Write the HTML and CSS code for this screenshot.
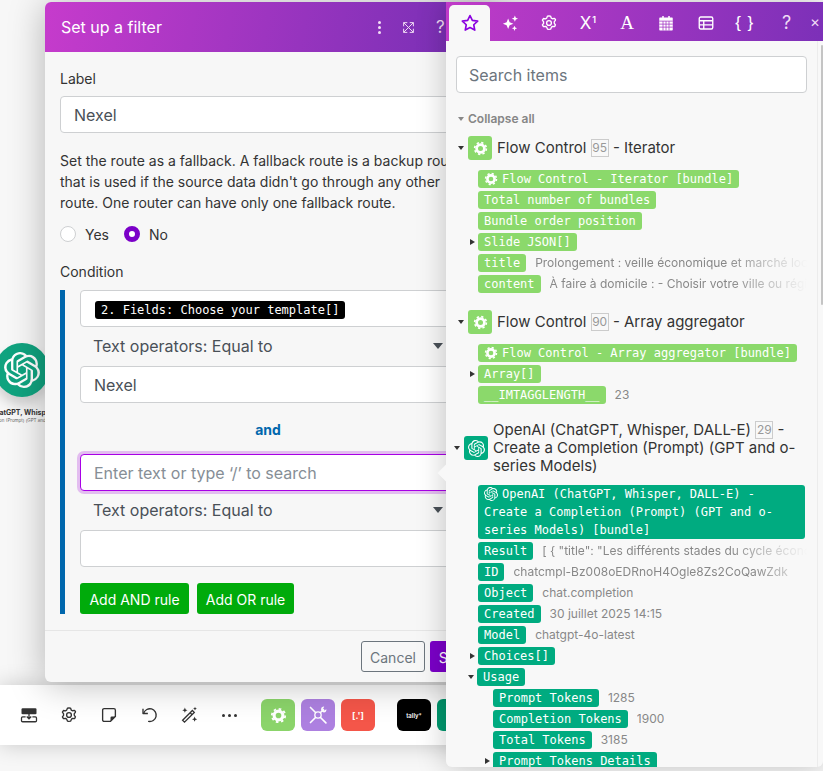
FILE: index.html
```html
<!DOCTYPE html>
<html lang="en">
<head>
<meta charset="utf-8">
<title>Set up a filter</title>
<link rel="stylesheet" href="styles.css">
</head>
<body>
<svg class="defs" width="0" height="0" aria-hidden="true">
  <symbol id="openai" viewBox="0 0 24 24"><path fill="currentColor" d="M22.2819 9.8211a5.9847 5.9847 0 0 0-.5157-4.9108 6.0462 6.0462 0 0 0-6.5098-2.9A6.0651 6.0651 0 0 0 4.9807 4.1818a5.9847 5.9847 0 0 0-3.9977 2.9 6.0462 6.0462 0 0 0 .7427 7.0966 5.98 5.98 0 0 0 .511 4.9107 6.051 6.051 0 0 0 6.5146 2.9001A5.9847 5.9847 0 0 0 13.2599 24a6.0557 6.0557 0 0 0 5.7718-4.2058 5.9894 5.9894 0 0 0 3.9977-2.9001 6.0557 6.0557 0 0 0-.7475-7.0729zm-9.022 12.6081a4.4755 4.4755 0 0 1-2.8764-1.0408l.1419-.0804 4.7783-2.7582a.7948.7948 0 0 0 .3927-.6813v-6.7369l2.02 1.1686a.071.071 0 0 1 .038.052v5.5826a4.504 4.504 0 0 1-4.4945 4.4944zm-9.6607-4.1254a4.4708 4.4708 0 0 1-.5346-3.0137l.142.0852 4.783 2.7582a.7712.7712 0 0 0 .7806 0l5.8428-3.3685v2.3324a.0804.0804 0 0 1-.0332.0615L9.74 19.9502a4.4992 4.4992 0 0 1-6.1408-1.6464zM2.3408 7.8956a4.485 4.485 0 0 1 2.3655-1.9728V11.6a.7664.7664 0 0 0 .3879.6765l5.8144 3.3543-2.0201 1.1685a.0757.0757 0 0 1-.071 0l-4.8303-2.7865A4.504 4.504 0 0 1 2.3408 7.872zm16.5963 3.8558L13.1038 8.364 15.1192 7.2a.0757.0757 0 0 1 .071 0l4.8303 2.7913a4.4944 4.4944 0 0 1-.6765 8.1042v-5.6772a.79.79 0 0 0-.407-.667zm2.0107-3.0231l-.142-.0852-4.7735-2.7818a.7759.7759 0 0 0-.7854 0L9.409 9.2297V6.8974a.0662.0662 0 0 1 .0284-.0615l4.8303-2.7866a4.4992 4.4992 0 0 1 6.6802 4.66zM8.3065 12.863l-2.02-1.1638a.0804.0804 0 0 1-.038-.0567V6.0742a4.4992 4.4992 0 0 1 7.3757-3.4537l-.142.0805L8.704 5.459a.7948.7948 0 0 0-.3927.6813zm1.0976-2.3654l2.602-1.4998 2.6069 1.4998v2.9994l-2.5974 1.4997-2.6067-1.4997Z"/></symbol>
  <symbol id="cog" viewBox="0 0 24 24"><circle cx="12" cy="12" r="6.2" fill="none" stroke="currentColor" stroke-width="4.4"/><circle cx="12" cy="12" r="9.4" fill="none" stroke="currentColor" stroke-width="2.6" stroke-dasharray="3.7 3.68"/></symbol>
  <symbol id="gear-line" viewBox="0 0 24 24"><g fill="none" stroke="currentColor" stroke-width="1.8" stroke-linejoin="round"><path d="M12 2.5l2 .3 1 2.6 1.6.9 2.7-.5 1.3 1.6-.2 1 -1.5 2 .1 1.1 .1.9 1.5 2-1 2.4-2.7-.3-1.6 1-1 2.6-2.8.3-1.6-.3-1-2.6-1.6-1-2.7.4-1.4-2.4 1.6-2-.1-1 .1-1-1.6-2.2 1.4-2.3 2.7.4 1.6-.9 1-2.6z"/><circle cx="12" cy="12" r="3.2"/></g></symbol>
</svg>

<div class="node">
  <div class="node-circle"><svg class="node-logo"><use href="#openai"/></svg></div>
  <div class="node-title">OpenAI (ChatGPT, Whisper, DALL-E)</div>
  <div class="node-sub">Create a Completion (Prompt) (GPT and o-series Models)</div>
</div>

<div class="toolbar">
  <span class="tool"><svg viewBox="0 0 24 24" class="tool-svg"><rect x="2" y="3" width="20" height="8" rx="1.500" fill="#333"/><path d="M2 16v3.500A1.500 1.500 0 0 0 3.500 21h17a1.500 1.500 0 0 0 1.500-1.500V16a1.500 1.500 0 0 0-1.500-1.500h-4M2 16a1.500 1.500 0 0 1 1.500-1.500h4M12 10v7m-3-3l3 3 3-3" fill="none" stroke="#333" stroke-width="1.700"/></svg></span>
  <span class="tool"><svg class="tool-svg"><use href="#gear-line"/></svg></span>
  <span class="tool"><svg viewBox="0 0 24 24" class="tool-svg"><path d="M5.500 3.500h13a2 2 0 0 1 2 2V14l-6.500 6.500H5.500a2 2 0 0 1-2-2v-13a2 2 0 0 1 2-2z" fill="none" stroke="#333" stroke-width="1.800"/><path d="M20.500 14h-5a1.500 1.500 0 0 0-1.500 1.500v5z" fill="#333"/></svg></span>
  <span class="tool"><svg viewBox="0 0 24 24" class="tool-svg"><path d="M5 9.500A8.500 8.500 0 1 1 11.500 20.500" fill="none" stroke="#333" stroke-width="1.800" stroke-linecap="round"/><path d="M4 3.500V10h6.500" fill="none" stroke="#333" stroke-width="1.800" stroke-linejoin="round"/></svg></span>
  <span class="tool"><svg viewBox="0 0 24 24" class="tool-svg"><path d="M3.500 19l13-13 2.500 2.500-13 13zM13.500 9l2.500 2.500" fill="none" stroke="#333" stroke-width="1.800"/><path d="M6.500 2l1 2.500L10 5.500l-2.500 1-1 2.500-1-2.500L3 5.500l2.500-1zM20 1l.7 1.800 1.800.7-1.800.7L20 6l-.7-1.800-1.800-.7 1.800-.7zM19.500 14l1 2.500 2.500 1-2.500 1-1 2.500-1-2.500-2.500-1 2.500-1z" fill="#333"/></svg></span>
  <span class="tool tool-dots"><i></i><i></i><i></i></span>
  <span class="app app-green"><svg class="app-svg"><use href="#cog"/></svg></span>
  <span class="app app-purple"><svg viewBox="0 0 24 24" class="app-svg-lg"><g fill="none" stroke="#fff" stroke-width="2" stroke-linecap="round"><path d="M3 3l6 6M15 15l6.500 6.500M9 15l-6 6M15 9l3.500-3.500"/><circle cx="12" cy="12" r="3.800" stroke-width="1.600"/><path d="M17 8l2 1a3.500 3.500 0 0 0 3-4l-2.500 1.500L18 4.500 19.500 2a3.500 3.500 0 0 0-4 3z" fill="#fff" stroke="none"/></g></svg></span>
  <span class="app app-red">[.']</span>
  <span class="app app-black">tally*</span>
  <span class="app app-teal"></span>
</div>

<section class="modal">
  <header class="modal-head">
    <h1 class="modal-title">Set up a filter</h1>
    <span class="head-dots"><i></i><i></i><i></i></span>
    <svg viewBox="0 0 16 16" class="head-expand"><path d="M2 2l12 12M14 2L2 14M2 6.500V2h4.500M9.500 2H14v4.500M14 9.500V14H9.500M6.500 14H2V9.500" fill="none" stroke="#f3dff5" stroke-width="1.200"/></svg>
    <span class="head-help">?</span>
  </header>
  <div class="modal-body">
    <label class="field-label">Label</label>
    <div class="input input-label">Nexel</div>
    <p class="help">Set the route as a fallback. A fallback route is a backup route that is used if the source data didn't go through any other route. One router can have only one fallback route.</p>
    <div class="radios">
      <span class="radio"></span><span class="radio-text">Yes</span>
      <span class="radio radio-on"></span><span class="radio-text">No</span>
    </div>
    <label class="field-label cond-label">Condition</label>
    <div class="cond">
      <div class="input"><span class="token">2. Fields: Choose your template[]</span></div>
      <div class="operator"><span>Text operators: Equal to</span><span class="op-caret"></span></div>
      <div class="input">Nexel</div>
      <div class="and">and</div>
      <div class="input input-focus">Enter text or type ‘/’ to search</div>
      <div class="operator"><span>Text operators: Equal to</span><span class="op-caret"></span></div>
      <div class="input"></div>
      <div class="cond-actions">
        <button class="btn btn-green btn-and">Add AND rule</button>
        <button class="btn btn-green btn-or">Add OR rule</button>
      </div>
    </div>
  </div>
  <footer class="modal-foot">
    <button class="btn btn-cancel">Cancel</button>
    <button class="btn btn-save">Save</button>
  </footer>
</section>

<aside class="panel">
  <span class="pointer"></span>
  <nav class="tabs">
    <span class="tab tab-active"><svg viewBox="0 0 24 24" class="tab-icon star"><path d="M12 3l2.800 5.900 6.400.8-4.700 4.400 1.200 6.400L12 17.400l-5.700 3.100 1.200-6.400-4.700-4.400 6.400-.8z" fill="none" stroke="#8a00e0" stroke-width="2" stroke-linejoin="round"/></svg></span>
    <span class="tab"><svg viewBox="0 0 24 24" class="tab-icon"><path d="M9.500 6l2 5 5 2-5 2-2 5-2-5-5-2 5-2zM18.500 2l1.200 3 3 1.200-3 1.200-1.200 3-1.200-3-3-1.200 3-1.200zM18 15.500l1 2.500 2.500 1-2.500 1-1 2.500-1-2.500-2.500-1 2.500-1z" fill="#fff"/></svg></span>
    <span class="tab"><svg class="tab-icon"><use href="#gear-line"/></svg></span>
    <span class="tab tab-text">X<sup class="tab-sup">1</sup></span>
    <span class="tab tab-serif">A</span>
    <span class="tab"><svg viewBox="0 0 24 24" class="tab-icon"><path d="M4 4.500h3V2.500h2v2h6v-2h2v2h3a1 1 0 0 1 1 1V21a1 1 0 0 1-1 1H4a1 1 0 0 1-1-1V5.500a1 1 0 0 1 1-1z" fill="#fff"/><path d="M3 9.500h18M3 13.500h18M3 17.500h18M8 9.500V22M12 9.500V22M16 9.500V22" stroke="#a234c2" stroke-width="1"/></svg></span>
    <span class="tab"><svg viewBox="0 0 24 24" class="tab-icon"><rect x="3" y="4" width="18" height="16" rx="2" fill="none" stroke="#fff" stroke-width="1.800"/><path d="M3 9h18M3 14.500h18M9 9v11" stroke="#fff" stroke-width="1.800"/></svg></span>
    <span class="tab tab-brace">{ }</span>
    <span class="tab-help">?</span>
    <span class="tab-close">✕</span>
  </nav>
  <div class="panel-body">
    <div class="search">Search items</div>
    <div class="collapse"><span class="caret-down caret-grey"></span>Collapse all</div>

    <div class="sec">
      <div class="sec-head">
        <span class="caret-down"></span>
        <span class="sec-icon sec-icon-green"><svg class="sec-cog"><use href="#cog"/></svg></span>
        <span class="sec-title">Flow Control <span class="num">95</span> - Iterator</span>
      </div>
      <div class="row"><span class="pill green"><svg class="pill-icon"><use href="#cog"/></svg>Flow Control - Iterator [bundle]</span></div>
      <div class="row"><span class="pill green">Total number of bundles</span></div>
      <div class="row"><span class="pill green">Bundle order position</span></div>
      <div class="row"><span class="caret-right"></span><span class="pill green">Slide JSON[]</span></div>
      <div class="row"><span class="pill green">title</span><span class="val fade">Prolongement : veille économique et marché local concurrentiel</span></div>
      <div class="row"><span class="pill green">content</span><span class="val fade">À faire à domicile : - Choisir votre ville ou région de référence</span></div>
    </div>

    <div class="sec">
      <div class="sec-head">
        <span class="caret-down"></span>
        <span class="sec-icon sec-icon-green"><svg class="sec-cog"><use href="#cog"/></svg></span>
        <span class="sec-title">Flow Control <span class="num">90</span> - Array aggregator</span>
      </div>
      <div class="row"><span class="pill green"><svg class="pill-icon"><use href="#cog"/></svg>Flow Control - Array aggregator [bundle]</span></div>
      <div class="row"><span class="caret-right"></span><span class="pill green">Array[]</span></div>
      <div class="row"><span class="pill green">__IMTAGGLENGTH__</span><span class="val">23</span></div>
    </div>

    <div class="sec sec-openai">
      <div class="sec-head">
        <span class="caret-down"></span>
        <span class="sec-icon sec-icon-teal"><svg class="sec-logo"><use href="#openai"/></svg></span>
        <span class="sec-title">OpenAI (ChatGPT, Whisper, DALL-E) <span class="num">29</span> - Create a Completion (Prompt) (GPT and o-series Models)</span>
      </div>
      <div class="row row-block"><span class="pill teal pill-wide"><svg class="pill-icon"><use href="#openai"/></svg>OpenAI (ChatGPT, Whisper, DALL-E) - Create a Completion (Prompt) (GPT and o-series Models) [bundle]</span></div>
      <div class="row"><span class="pill teal">Result</span><span class="val fade">[ { "title": "Les différents stades du cycle économique", "content"</span></div>
      <div class="row"><span class="pill teal">ID</span><span class="val fade-soft">chatcmpl-Bz008oEDRnoH4Ogle8Zs2CoQawZdk</span></div>
      <div class="row"><span class="pill teal">Object</span><span class="val">chat.completion</span></div>
      <div class="row"><span class="pill teal">Created</span><span class="val">30 juillet 2025 14:15</span></div>
      <div class="row"><span class="pill teal">Model</span><span class="val">chatgpt-4o-latest</span></div>
      <div class="row"><span class="caret-right"></span><span class="pill teal">Choices[]</span></div>
      <div class="row"><span class="caret-down caret-row"></span><span class="pill teal">Usage</span></div>
      <div class="row row-sub"><span class="pill teal">Prompt Tokens</span><span class="val">1285</span></div>
      <div class="row row-sub"><span class="pill teal">Completion Tokens</span><span class="val">1900</span></div>
      <div class="row row-sub"><span class="pill teal">Total Tokens</span><span class="val">3185</span></div>
      <div class="row row-sub"><span class="caret-right"></span><span class="pill teal">Prompt Tokens Details</span></div>
    </div>
  </div>
  <span class="scroll-track"></span>
  <span class="scroll-thumb"></span>
</aside>
</body>
</html>
```

FILE: styles.css
```css
* { box-sizing: border-box; }
html, body { height: 100%; }
body {
  margin: 0;
  background: #f7f7f7;
  overflow: hidden;
  position: relative;
  font-family: Inter, "Liberation Sans", sans-serif;
  font-size: 14px;
  color: #333;
}
.defs { position: absolute; }

/* canvas node */
.node { position: absolute; left: -5px; top: 343px; width: 54px; }
.node-circle {
  width: 54px; height: 54px; border-radius: 50%;
  background: #10a37f;
  display: flex; align-items: center; justify-content: center;
  color: #fff;
  box-shadow: 0 8px 12px rgba(0,0,0,.16);
}
.node-logo { width: 36px; height: 36px; }
.node-title {
  position: absolute; left: -60px; width: 174px; top: 65px;
  text-align: center; white-space: nowrap;
  font-size: 7px; font-weight: 700; line-height: 10px; color: #333;
}
.node-sub {
  position: absolute; left: -60px; width: 174px; top: 74px;
  text-align: center; white-space: nowrap;
  font-size: 4.500px; line-height: 7px; color: #666;
}

/* toolbar */
.toolbar {
  position: absolute; left: 0; top: 685px; width: 470px; height: 60px;
  background: #fff;
  box-shadow: 0 0 22px rgba(0,0,0,.2);
  display: flex; align-items: center; padding-left: 9px;
}
.tool { flex: none; width: 40px; display: flex; justify-content: center; color: #333; }
.tool-svg { width: 18px; height: 18px; color: #333; }
.tool-dots { gap: 3px; align-items: center; }
.tool-dots i { width: 3px; height: 3px; border-radius: 50%; background: #333; }
.app {
  width: 34px; height: 32px; border-radius: 6px; margin-right: 6px;
  display: flex; align-items: center; justify-content: center; color: #fff; flex: none;
}
.app-green { background: #8bd46a; margin-left: 12px; }
.app-purple { background: #ad80e0; }
.app-red { background: #f45649; font-size: 9px; font-weight: 700; margin-right: 22px; }
.app-black { background: #000; font-size: 6px; font-weight: 600; }
.app-teal { background: #00996f; }
.app-svg { width: 17px; height: 17px; }
.app-svg-lg { width: 20px; height: 20px; }

/* modal */
.modal {
  position: absolute; left: 45px; top: 2px; width: 450px; height: 680px;
  background: #f7f7f7;
  border-radius: 6px;
  box-shadow: 0 2px 36px rgba(0,0,0,.28);
}
.modal-head {
  height: 50px; border-radius: 6px 6px 0 0;
  background: linear-gradient(100deg, #c63bcc 0%, #7b30b6 90%);
  display: flex; align-items: center; padding-left: 16px; color: #fff;
}
.modal-title { margin: 0; font-size: 16px; font-weight: 400; flex: 1; }
.head-dots { display: flex; flex-direction: column; gap: 2px; margin-right: 21px; }
.head-dots i { width: 3px; height: 3px; border-radius: 50%; background: #f3dff5; }
.head-expand { width: 13px; height: 13px; margin-right: 21px; }
.head-help { font-size: 17px; width: 59px; color: #f3dff5; }
.modal-body { padding: 16px 15px 0; height: 579px; border-bottom: 1px solid #e6e6e6; }
.field-label { display: block; line-height: 21px; color: #333; }
.input {
  height: 37px; background: #fff;
  border: 1px solid #ced0d2; border-radius: 4px;
  padding: 0 13px; font-size: 16px; line-height: 37px; color: #495057;
}
.input-label { margin-top: 7px; }
.help { margin: 17px 0 0; line-height: 21px; max-width: 405px; color: #333; }
.radios { display: flex; align-items: center; height: 20px; margin-top: 11px; }
.radio {
  width: 16px; height: 16px; border-radius: 50%;
  border: 1px solid #ced0d2; background: #fff; margin-right: 9px;
}
.radio-on { border: 5px solid #7b00c8; }
.radio-text { margin-right: 15px; color: #333; }
.cond-label { margin-top: 17px; }
.cond {
  margin-top: 8px; height: 324px;
  border-left: 5px solid #0067ad;
  padding-left: 15px;
}
.token {
  display: inline-block; background: #000; color: #fff;
  font: 12px/18px "DejaVu Sans Mono", monospace;
  padding: 0 6px; border-radius: 3px; vertical-align: 1px; margin-left: 1px;
}
.operator {
  height: 39px; display: flex; align-items: center; justify-content: space-between;
  padding: 0 2px 2px 13px; font-size: 16px; color: #495057; margin-right: 35px;
}
.op-caret {
  width: 0; height: 0;
  border-left: 5.500px solid transparent; border-right: 5.500px solid transparent;
  border-top: 6px solid #495057;
}
.and { height: 51px; line-height: 53px; text-align: center; font-weight: 700; color: #0067ad; width: 376px; }
.input-focus {
  border-color: #a800e6;
  box-shadow: 0 0 0 3px #e3bdf0;
  color: #868e96;
}
.cond-actions { display: flex; gap: 8px; margin-top: 16px; }
.btn {
  height: 31px; border: 0; border-radius: 3px; font-family: inherit; font-size: 14px;
  padding: 1px 0 0; color: #fff;
}
.btn-green { background: #00ab0b; }
.btn-and { width: 109px; }
.btn-or { width: 97px; }
.modal-foot { display: flex; justify-content: flex-end; gap: 5px; padding: 10px 15px 0 0; }
.btn-cancel { width: 64px; background: #f7f7f7; border: 1px solid #6c757d; color: #6c757d; }
.btn-save { width: 50px; background: #7b00c8; }

/* panel */
.panel {
  position: absolute; left: 446px; top: 2px; width: 377px; height: 765px;
  background: #f8f8f8; border-radius: 0 0 6px 6px;
  box-shadow: 0 0 30px rgba(0,0,0,.22);
}
.pointer {
  position: absolute; left: -6px; top: 465px; width: 12px; height: 12px;
  background: #f8f8f8; transform: rotate(45deg);
}
.tabs {
  height: 39px; position: relative;
  background: linear-gradient(100deg, #c03bc8 0%, #7c30b8 100%);
  display: flex; align-items: flex-end; padding-left: 3px; color: #fff;
}
.tab { width: 39.200px; height: 36px; display: flex; align-items: center; justify-content: center; flex: none; }
.tab-active { width: 41px; background: #f8f8f8; border-radius: 5px 5px 0 0; }
.tab-icon { width: 18px; height: 18px; color: #fff; }
.star { width: 20px; height: 20px; }
.tab-text { font-size: 17px; }
.tab-sup { font-size: 9px; line-height: 1; align-self: center; margin-top: -8px; margin-left: 1px; font-weight: 600; }
.tab-serif { font: 400 19px "Liberation Serif", serif; }
.tab-brace { font: 400 17px "Liberation Sans", sans-serif; letter-spacing: 1px; }
.tab-help { position: absolute; left: 336px; top: 10px; font-size: 18px; line-height: 22px; color: #f0dcf5; }
.tab-close { position: absolute; left: 364px; top: 11px; font-size: 12px; line-height: 20px; color: #f0dcf5; }
.panel-body { height: 726px; overflow: hidden; padding: 15px 16px 0 10px; }
.search {
  height: 37px; background: #fff; border: 1px solid #ced0d2; border-radius: 4px;
  padding: 0 12px; font-size: 16px; line-height: 37px; color: #6c757d;
}
.collapse {
  margin-top: 16px; height: 20px; line-height: 20px;
  font-size: 12px; font-weight: 600; color: #868686;
  display: flex; align-items: center; padding-left: 2px;
}
.caret-down {
  flex: none; width: 0; height: 0; margin-right: 4px;
  border-left: 3.500px solid transparent; border-right: 3.500px solid transparent;
  border-top: 4px solid #333;
}
.caret-grey { border-top-color: #888; }
.caret-row { margin-left: -10px; margin-right: 3px; }
.caret-right {
  flex: none; width: 0; height: 0; margin-left: -8px; margin-right: 3px;
  border-top: 3.500px solid transparent; border-bottom: 3.500px solid transparent;
  border-left: 5px solid #333;
}
.sec { padding-left: 2px; margin-bottom: 17px; }
.collapse + .sec { margin-top: 7px; }
.sec-head { display: flex; align-items: center; margin-bottom: 10px; }
.sec-openai { margin-left: -4px; }
.sec-icon {
  width: 24px; height: 24px; border-radius: 3px; flex: none; margin-right: 5px;
  display: flex; align-items: center; justify-content: center; color: #fff;
}
.sec-icon-green { background: #8bd96b; }
.sec-icon-teal { background: #00ab80; }
.sec-cog { width: 15px; height: 15px; }
.sec-logo { width: 17px; height: 17px; }
.sec-title { font-size: 15px; line-height: 18px; color: #333; }
.num {
  display: inline-block; min-width: 18px; height: 18px; padding: 0;
  border: 1px solid #ccc; font-size: 12px; line-height: 16px; color: #999;
  text-align: center; vertical-align: top;
}
.row { display: flex; align-items: center; height: 18px; margin-bottom: 3px; padding-left: 20px; }
.sec-openai .row { padding-left: 24px; }
.sec-openai .row-sub { padding-left: 39px; }
.row-block { height: 54px; }
.pill {
  flex: none; display: inline-block; height: 18px; padding: 0 6px; border-radius: 3px;
  font: 12px/18px "DejaVu Sans Mono", monospace; color: #fff; white-space: pre;
}
.pill-wide { flex: none; width: 327px; height: 54px; white-space: normal; }
.pill-icon { width: 14px; height: 14px; margin-right: 4px; vertical-align: -3px; }
.green { background: #8bd96b; }
.teal { background: #00ab80; }
.val {
  margin-left: 9px; font-size: 12px; line-height: 18px; color: #888;
  white-space: nowrap; overflow: hidden; min-width: 0;
}
.fade {
  -webkit-mask-image: linear-gradient(90deg, #000 70%, transparent 100%);
  mask-image: linear-gradient(90deg, #000 70%, transparent 100%);
}
.fade-soft {
  -webkit-mask-image: linear-gradient(90deg, #000 88%, rgba(0,0,0,.4) 100%);
  mask-image: linear-gradient(90deg, #000 88%, rgba(0,0,0,.4) 100%);
}
.scroll-track {
  position: absolute; right: 0; top: 39px; width: 6px; height: 726px;
  border-left: 1px solid #ececec;
}
.scroll-thumb {
  position: absolute; right: 0; top: 43px; width: 2px; height: 260px;
  background: #c4c4c4; border-radius: 1px;
}
```
